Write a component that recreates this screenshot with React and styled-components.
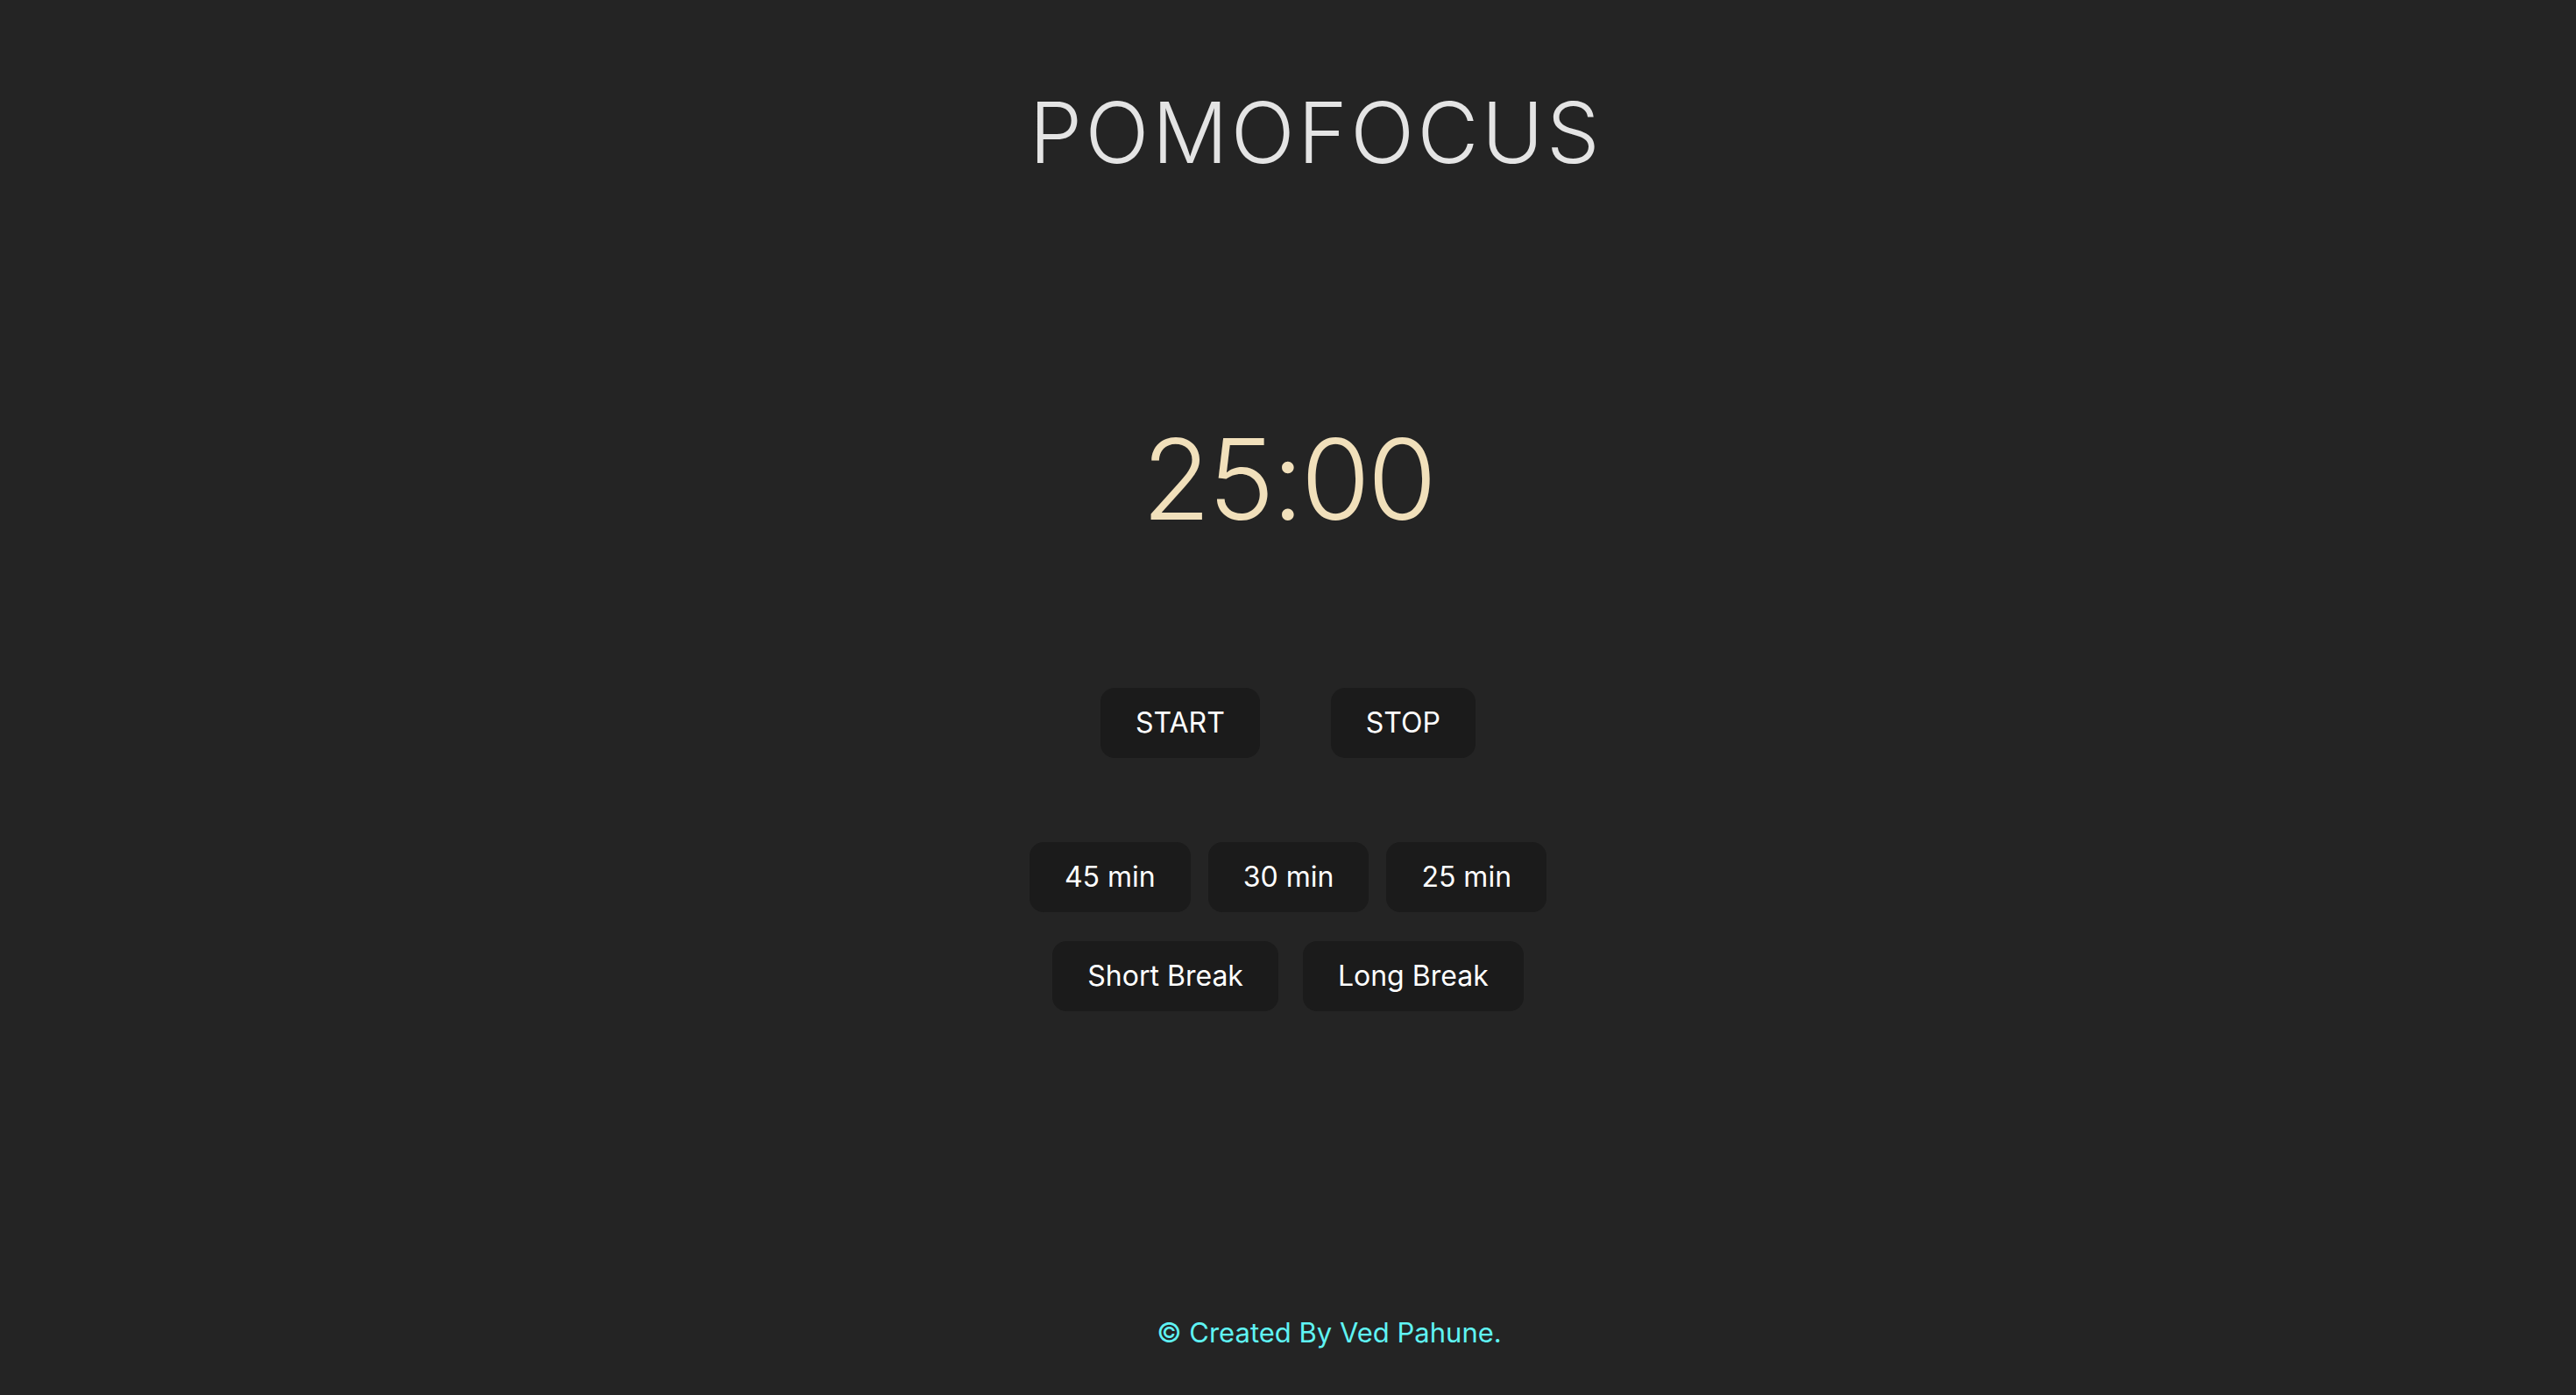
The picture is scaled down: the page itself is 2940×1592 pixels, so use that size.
import React from "react";
import styled, { createGlobalStyle } from "styled-components";

const GlobalStyle = createGlobalStyle`
  body {
    margin: 0;
    background-color: #242424;
    font-family: Inter, "Noto Sans", sans-serif;
  }
`;

const Page = styled.div`
  min-height: 100vh;
  display: flex;
  flex-direction: column;
  align-items: center;
  padding-top: 103px;
  box-sizing: border-box;
`;

const Title = styled.h1`
  margin: 0 0 0 64px;
  font-size: 96px;
  line-height: 1;
  font-weight: 300;
  letter-spacing: 3.5px;
  color: #e4e4e4;
`;

const Timer = styled.div`
  margin-top: 284px;
  font-size: 128px;
  line-height: 1;
  font-weight: 300;
  letter-spacing: -3px;
  color: #f1e0bb;
`;

const ButtonRow = styled.div`
  display: flex;
  justify-content: center;
  gap: ${(p) => p.gap}px;
  margin-top: ${(p) => p.top}px;
`;

const Button = styled.button`
  background-color: #1b1b1b;
  color: #ffffff;
  border: none;
  border-radius: 16px;
  padding: 20px 40px;
  font-family: Inter, "Noto Sans", sans-serif;
  font-size: 32px;
  line-height: 40px;
  font-weight: 400;
  cursor: pointer;
`;

const Footer = styled.footer`
  margin: 351px 0 0 94px;
  font-size: 31px;
  line-height: 1;
  color: #5ff3f3;
`;

const App = () => {
  return (
    <>
      <GlobalStyle />
      <Page>
        <Title>POMOFOCUS</Title>
        <Timer>25:00</Timer>
        <ButtonRow gap={81} top={174}>
          <Button>START</Button>
          <Button>STOP</Button>
        </ButtonRow>
        <ButtonRow gap={20} top={96}>
          <Button>45 min</Button>
          <Button>30 min</Button>
          <Button>25 min</Button>
        </ButtonRow>
        <ButtonRow gap={28} top={33}>
          <Button>Short Break</Button>
          <Button>Long Break</Button>
        </ButtonRow>
        <Footer>&copy; Created By Ved Pahune.</Footer>
      </Page>
    </>
  );
};

export default App;
